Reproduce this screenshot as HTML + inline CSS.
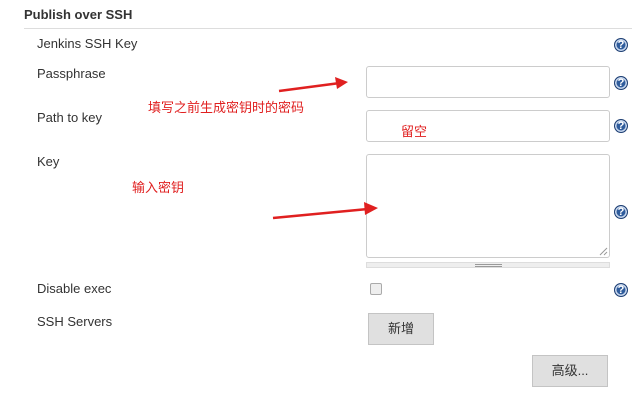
<!DOCTYPE html>
<html><head><meta charset="utf-8"><style>
body{margin:0;width:632px;height:402px;background:#fff;font-family:"Liberation Sans","Noto Sans CJK SC",sans-serif;position:relative;overflow:hidden;color:#333}
.a{position:absolute}
.lbl{font-size:13px;color:#333}
.box{border:1px solid #ccc;border-radius:3px;background:#fff;box-sizing:border-box}
.help{width:14px;height:14px;border-radius:50%;background:#2f5c9c;border:1px solid #1e3f73;box-sizing:border-box;color:#fff;font:bold 11px/13px "Liberation Sans",sans-serif;text-align:center;box-shadow:inset 0 0 0 1.5px #c9d8ee}
.red{color:#e02020;font-size:13px;font-family:"Liberation Sans","Noto Sans CJK SC",sans-serif}
.btn{background:#e0e0e0;border:1px solid #c4c4c4;box-sizing:border-box;font-size:13px;text-align:center;color:#333}
</style></head><body>
<div class="a" style="left:24px;top:7px;font-size:13px;font-weight:bold;color:#333">Publish over SSH</div>
<div class="a" style="left:24px;top:28px;width:608px;height:1px;background:#ddd"></div>
<div class="a lbl" style="left:37px;top:36px">Jenkins SSH Key</div>
<div class="a lbl" style="left:37px;top:66px">Passphrase</div>
<div class="a lbl" style="left:37px;top:110px">Path to key</div>
<div class="a lbl" style="left:37px;top:154px">Key</div>
<div class="a lbl" style="left:37px;top:281px">Disable exec</div>
<div class="a lbl" style="left:37px;top:314px">SSH Servers</div>
<div class="a help" style="left:614px;top:38px">?</div>
<div class="a help" style="left:614px;top:76px">?</div>
<div class="a help" style="left:614px;top:119px">?</div>
<div class="a help" style="left:614px;top:205px">?</div>
<div class="a help" style="left:614px;top:283px">?</div>
<div class="a box" style="left:366px;top:66px;width:244px;height:32px"></div>
<div class="a box" style="left:366px;top:110px;width:244px;height:32px"></div>
<div class="a box" style="left:366px;top:154px;width:244px;height:104px"></div>
<div class="a" style="left:366px;top:262px;width:244px;height:6px;background:#eee;border:1px solid #ddd;box-sizing:border-box"></div>
<div class="a" style="left:475px;top:264px;width:27px;height:1px;background:#999"></div>
<div class="a" style="left:475px;top:266px;width:27px;height:1px;background:#999"></div>
<div class="a" style="left:370px;top:283px;width:12px;height:12px;border:1px solid #aaa;border-radius:2px;background:#eee;box-sizing:border-box"></div>
<div class="a btn" style="left:368px;top:313px;width:66px;height:32px;line-height:30px">新增</div>
<div class="a btn" style="left:532px;top:355px;width:76px;height:32px;line-height:30px">高级...</div>
<div class="a red" style="left:148px;top:97px">填写之前生成密钥时的密码</div>
<div class="a red" style="left:401px;top:121px">留空</div>
<div class="a red" style="left:132px;top:177px">输入密钥</div>
<svg class="a" style="left:0;top:0" width="632" height="402">
<line x1="279" y1="91" x2="340" y2="83" stroke="#e02020" stroke-width="2.5"/>
<polygon points="348,82 335,77 337,89" fill="#e02020"/>
<line x1="273" y1="218" x2="368" y2="209" stroke="#e02020" stroke-width="2.5"/>
<polygon points="378,208 364,202 365,215" fill="#e02020"/>
<path d="M600 255 L607 248 M604 255 L607 252" stroke="#999" stroke-width="1"/>
</svg>
</body></html>
